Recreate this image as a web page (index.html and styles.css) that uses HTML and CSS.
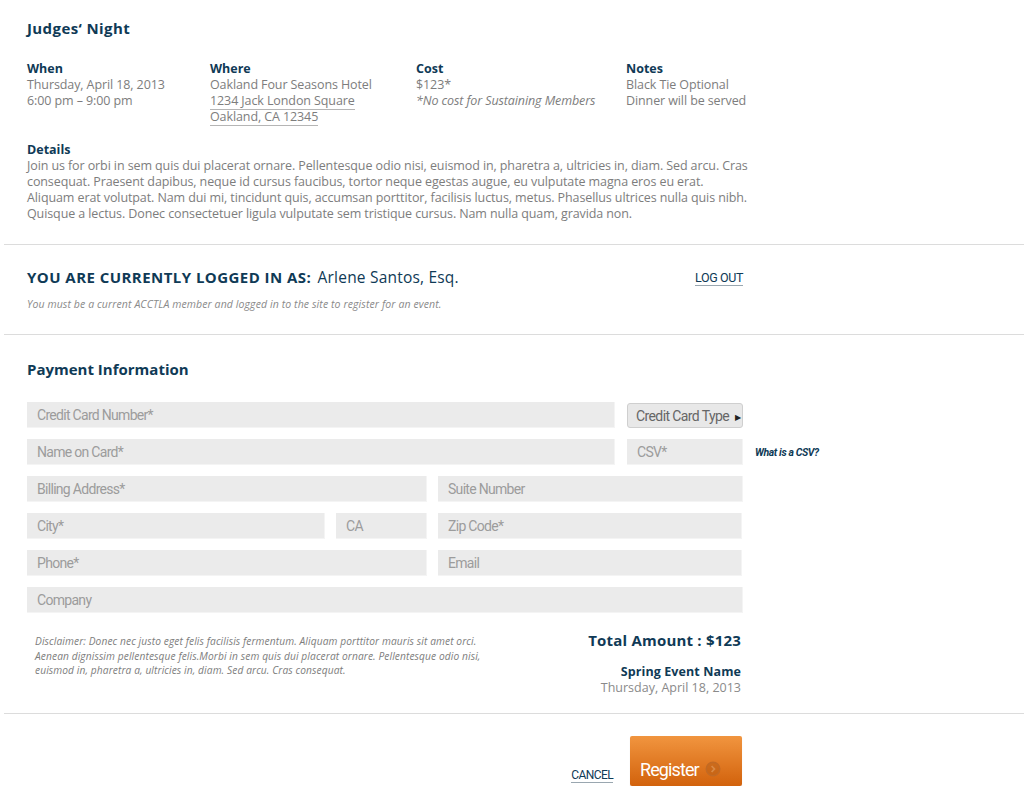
FILE: index.html
```html
<!DOCTYPE html>
<html lang="en">
<head>
<meta charset="utf-8">
<title>Judges' Night</title>
<link rel="stylesheet" href="styles.css">
</head>
<body>
<div class="page">
  <section class="block event">
    <h1 class="title">Judges‘ Night</h1>
    <div class="facts">
      <div class="fact when">
        <h3 class="label">When</h3>
        <p class="txt">Thursday, April 18, 2013</p>
        <p class="txt">6:00 pm – 9:00 pm</p>
      </div>
      <div class="fact where">
        <h3 class="label">Where</h3>
        <p class="txt">Oakland Four Seasons Hotel</p>
        <p class="txt"><a class="addr" href="#">1234 Jack London Square</a></p>
        <p class="txt"><a class="addr" href="#">Oakland, CA 12345</a></p>
      </div>
      <div class="fact cost">
        <h3 class="label">Cost</h3>
        <p class="txt">$123*</p>
        <p class="txt it">*No cost for Sustaining Members</p>
      </div>
      <div class="fact notes">
        <h3 class="label">Notes</h3>
        <p class="txt">Black Tie Optional</p>
        <p class="txt">Dinner will be served</p>
      </div>
    </div>
    <div class="details">
      <h3 class="label">Details</h3>
      <p class="txt"><span class="ln">Join us for orbi in sem quis dui placerat ornare. Pellentesque odio nisi, euismod in, pharetra a, ultricies in, diam. Sed arcu. Cras</span><span class="ln">consequat. Praesent dapibus, neque id cursus faucibus, tortor neque egestas augue, eu vulputate magna eros eu erat.</span><span class="ln">Aliquam erat volutpat. Nam dui mi, tincidunt quis, accumsan porttitor, facilisis luctus, metus. Phasellus ultrices nulla quis nibh.</span><span class="ln">Quisque a lectus. Donec consectetuer ligula vulputate sem tristique cursus. Nam nulla quam, gravida non.</span></p>
    </div>
  </section>

  <section class="block login">
    <div class="login-row">
      <h2 class="logged">YOU ARE CURRENTLY LOGGED IN AS: <span class="who">Arlene Santos, Esq.</span></h2>
      <a class="logout" href="#">LOG OUT</a>
    </div>
    <p class="must">You must be a current ACCTLA member and logged in to the site to register for an event.</p>
  </section>

  <section class="block payment">
    <h2 class="sub">Payment Information</h2>
    <div class="form">
      <div class="row">
        <input class="field w588" placeholder="Credit Card Number*">
        <button class="cctype" type="button">Credit Card Type <span class="tri">&#9654;</span></button>
      </div>
      <div class="row">
        <input class="field w588" placeholder="Name on Card*">
        <input class="field w116" placeholder="CSV*">
        <a class="whatcsv" href="#">What is a CSV?</a>
      </div>
      <div class="row">
        <input class="field w400" placeholder="Billing Address*">
        <input class="field w305" placeholder="Suite Number">
      </div>
      <div class="row">
        <input class="field w298" placeholder="City*">
        <input class="field w91" placeholder="CA">
        <input class="field w304" placeholder="Zip Code*">
      </div>
      <div class="row">
        <input class="field w400" placeholder="Phone*">
        <input class="field w304" placeholder="Email">
      </div>
      <div class="row">
        <input class="field w716" placeholder="Company">
      </div>
    </div>
    <div class="summary">
      <p class="disclaimer"><span class="ln">Disclaimer: Donec nec justo eget felis facilisis fermentum. Aliquam porttitor mauris sit amet orci.</span><span class="ln">Aenean dignissim pellentesque felis.Morbi in sem quis dui placerat ornare. Pellentesque odio nisi,</span><span class="ln">euismod in, pharetra a, ultricies in, diam. Sed arcu. Cras consequat.</span></p>
      <div class="totals">
        <div class="total">Total Amount : $123</div>
        <div class="ev-name">Spring Event Name</div>
        <div class="ev-date">Thursday, April 18, 2013</div>
      </div>
    </div>
  </section>

  <section class="actions">
    <a class="cancel" href="#">CANCEL</a>
    <button class="register" type="button">Register <span class="arrow"><svg width="16" height="16" viewBox="0 0 16 16"><circle cx="8" cy="8" r="6.8" fill="#b45a14" fill-opacity="0.45" stroke="#c26a24" stroke-width="1.4"/><path d="M6.6 5 L9.4 8 L6.6 11" fill="none" stroke="#d98a45" stroke-width="1.8"/></svg></span></button>
  </section>
</div>
</body>
</html>
```
FILE: styles.css
```css
html, body {
  margin: 0;
  padding: 0;
  background: #fff;
}
body {
  font-family: "Open Sans", "Noto Sans", sans-serif;
  color: #7a7a7a;
}
.page {
  padding: 18px 0 0 4px;
}
.block {
  border-bottom: 1px solid #dcdcdc;
  padding-left: 23px;
}
h1, h2, h3, p {
  margin: 0;
}
.title {
  font-size: 15px;
  line-height: 20px;
  font-weight: 700;
  color: #0f3a56;
  margin-bottom: 23px;
  letter-spacing: 0.4px;
}
.label {
  font-size: 12.5px;
  line-height: 16px;
  font-weight: 700;
  color: #0f3a56;
}
.txt {
  font-size: 12.5px;
  line-height: 16px;
  color: #7d7d7d;
  letter-spacing: -0.1px;
}
.it {
  font-style: italic;
}
.facts {
  display: flex;
}
.when { width: 183px; }
.where { width: 206px; }
.cost { width: 210px; }
.notes { width: 200px; }
.addr {
  color: #7d7d7d;
  text-decoration: none;
  border-bottom: 1px solid #b5b5b5;
}
.details {
  margin-top: 17px;
  padding-bottom: 22px;
}
.ln {
  display: block;
  white-space: nowrap;
}
.login {
  padding-top: 22px;
  padding-bottom: 23px;
}
.login-row {
  display: flex;
  align-items: center;
  justify-content: space-between;
  width: 716px;
}
.logged {
  font-size: 15px;
  line-height: 20px;
  font-weight: 700;
  color: #0f3a56;
  letter-spacing: 0.45px;
}
.who {
  font-weight: 400;
  font-size: 15.5px;
  letter-spacing: 0.2px;
  margin-left: 2px;
}
.logout {
  font-family: "Roboto", sans-serif;
  font-size: 12.5px;
  letter-spacing: -0.4px;
  color: #0f3a56;
  text-decoration: none;
  border-bottom: 1px solid #9aa7b0;
  line-height: 14px;
  margin-top: 3px;
}
.must {
  margin-top: 10px;
  font-size: 10.5px;
  line-height: 14px;
  font-style: italic;
  color: #8a8a8a;
  letter-spacing: 0.1px;
}
.payment {
  padding-top: 24px;
  padding-bottom: 17px;
}
.sub {
  font-size: 15px;
  line-height: 20px;
  font-weight: 700;
  color: #0f3a56;
  letter-spacing: 0;
}
.form {
  margin-top: 23px;
  display: flex;
  flex-direction: column;
  gap: 11px;
  width: 800px;
}
.row {
  display: flex;
  align-items: center;
  gap: 11px;
  height: 26px;
}
.field {
  box-sizing: border-box;
  height: 26px;
  border: none;
  border-bottom: 1px solid #f4f4f4;
  border-right: 1px solid #f4f4f4;
  background: #ebebeb;
  padding: 0 0 0 10px;
  margin: 0;
  font-family: "Roboto", sans-serif;
  font-size: 14px;
  letter-spacing: -0.7px;
  color: #777;
  outline: none;
}
.field::placeholder {
  color: #9c9c9c;
}
.w588 { width: 588px; margin-right: 1px; }
.w116 { width: 116px; }
.w400 { width: 400px; }
.w305 { width: 305px; }
.w304 { width: 304px; }
.w298 { width: 298px; }
.w91 { width: 91px; }
.w716 { width: 716px; }
.cctype {
  box-sizing: border-box;
  width: 116px;
  height: 25px;
  margin-top: 1px;
  background: #e8e8e8;
  border: 1px solid #cfcfcf;
  border-radius: 3px;
  font-family: "Roboto", sans-serif;
  font-size: 14px;
  letter-spacing: -0.6px;
  color: #666;
  text-align: left;
  padding: 0 0 0 8px;
}
.tri {
  font-size: 8px;
  color: #222;
  margin-left: 3px;
  vertical-align: 1px;
}
.whatcsv {
  font-family: "Roboto", sans-serif;
  font-size: 10.5px;
  letter-spacing: -0.4px;
  font-style: italic;
  font-weight: 700;
  color: #0f3a56;
  text-decoration: none;
  margin-left: 1px;
}
.summary {
  margin-top: 17px;
  width: 716px;
  display: flex;
  justify-content: space-between;
}
.disclaimer {
  margin-left: 8px;
  margin-top: 4px;
  font-size: 10.2px;
  line-height: 14.5px;
  font-style: italic;
  color: #7d7d7d;
  letter-spacing: 0.1px;
}
.totals {
  text-align: right;
  margin-right: 2px;
}
.total {
  font-size: 15px;
  line-height: 20px;
  font-weight: 700;
  color: #0f3a56;
  letter-spacing: 0.2px;
}
.ev-name {
  margin-top: 14px;
  font-size: 12.5px;
  line-height: 16px;
  font-weight: 700;
  color: #0f3a56;
  letter-spacing: 0.1px;
}
.ev-date {
  font-size: 12.5px;
  line-height: 16px;
  color: #8a8a8a;
}
.actions {
  display: flex;
  align-items: flex-end;
  gap: 17px;
  width: 738px;
  justify-content: flex-end;
  padding-top: 22px;
}
.cancel {
  font-family: "Roboto", sans-serif;
  font-size: 12px;
  letter-spacing: -0.6px;
  color: #0f3a56;
  text-decoration: none;
  border-bottom: 1px solid #9aa7b0;
  line-height: 14px;
  margin-bottom: 3px;
}
.register {
  box-sizing: border-box;
  width: 112px;
  height: 50px;
  border: none;
  border-radius: 2px;
  background: linear-gradient(#f1953f, #d2620c);
  color: #fff;
  font-family: "Roboto", sans-serif;
  font-size: 18px;
  letter-spacing: -0.9px;
  text-align: left;
  padding: 16px 0 0 10px;
  display: flex;
  align-items: center;
  gap: 6px;
  box-shadow: 0 1px 1px rgba(0,0,0,0.15);
}
.arrow {
  display: inline-flex;
}
```
